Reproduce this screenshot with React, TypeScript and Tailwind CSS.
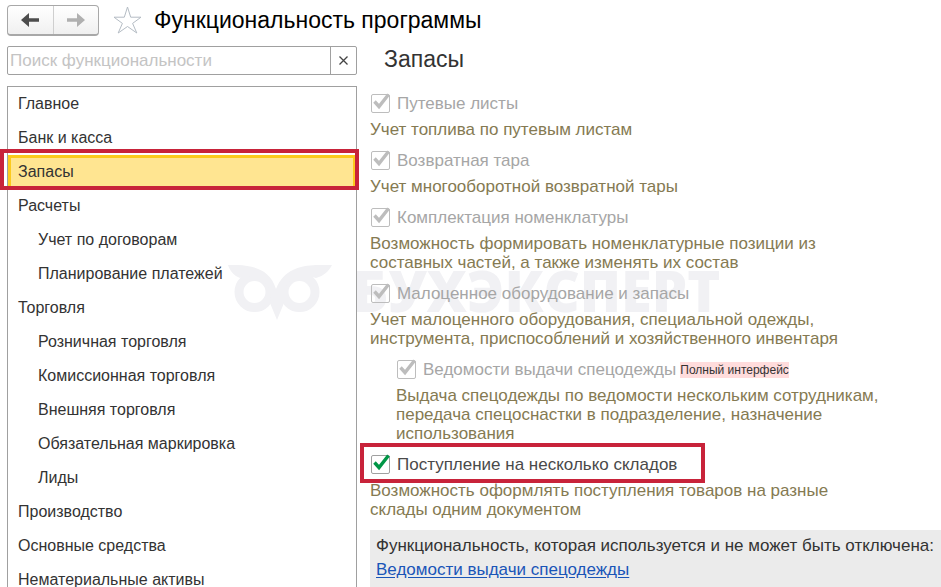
import { useState } from 'react';
import clsx from 'clsx';

type Feature = {
  id: string;
  label: string;
  description: string;
  locked?: boolean;
  nested?: boolean;
  badge?: string;
  highlighted?: boolean;
};

const sections = [
  { title: 'Главное' },
  { title: 'Банк и касса' },
  { title: 'Запасы' },
  { title: 'Расчеты' },
  { title: 'Учет по договорам', nested: true },
  { title: 'Планирование платежей', nested: true },
  { title: 'Торговля' },
  { title: 'Розничная торговля', nested: true },
  { title: 'Комиссионная торговля', nested: true },
  { title: 'Внешняя торговля', nested: true },
  { title: 'Обязательная маркировка', nested: true },
  { title: 'Лиды', nested: true },
  { title: 'Производство' },
  { title: 'Основные средства' },
  { title: 'Нематериальные активы' },
];

const features: Feature[] = [
  { id: 'waybills', label: 'Путевые листы', description: 'Учет топлива по путевым листам', locked: true },
  { id: 'tare', label: 'Возвратная тара', description: 'Учет многооборотной возвратной тары', locked: true },
  {
    id: 'kits',
    label: 'Комплектация номенклатуры',
    description: 'Возможность формировать номенклатурные позиции из составных частей, а также изменять их состав',
    locked: true,
  },
  {
    id: 'low-value',
    label: 'Малоценное оборудование и запасы',
    description:
      'Учет малоценного оборудования, специальной одежды, инструмента, приспособлений и хозяйственного инвентаря',
    locked: true,
  },
  {
    id: 'workwear',
    label: 'Ведомости выдачи спецодежды',
    description:
      'Выдача спецодежды по ведомости нескольким сотрудникам, передача спецоснастки в подразделение, назначение использования',
    locked: true,
    nested: true,
    badge: 'Полный интерфейс',
  },
  {
    id: 'warehouses',
    label: 'Поступление на несколько складов',
    description: 'Возможность оформлять поступления товаров на разные склады одним документом',
    highlighted: true,
  },
];

function Watermark() {
  return (
    <div aria-hidden="true" className="pointer-events-none absolute left-[228px] top-[264px] -z-10 flex items-start text-[#f1f1f4]">
      <svg width="104" height="57" viewBox="0 0 104 57" fill="none" stroke="currentColor">
        <circle cx="26.500" cy="28" r="15.500" strokeWidth="9" />
        <circle cx="71.500" cy="28" r="15.500" strokeWidth="9" />
        <path
          fill="currentColor"
          stroke="none"
          d="M0 1h10c15 1 32 4 38 24 8-20 24-23 40-24h16c-3 6-8 11-16 13-6-2-12-2-19-1-9 3-15 13-13 26l-7 17-7-17c2-13-4-23-13-26-6-2-12-1-17 1C6 12 2 7 0 1Z"
        />
      </svg>
      <span className="ml-5 font-['Open_Sans',sans-serif] text-[56px] leading-[52px] font-extrabold">БУХЭКСПЕРТ</span>
    </div>
  );
}

function FeatureRow({ feature }: { feature: Feature }) {
  const [checked, setChecked] = useState(true);

  return (
    <div className={clsx(feature.nested && 'pl-[26px]')}>
      <div className="relative flex items-center pt-3 pb-[7px] pl-px leading-[19px]">
        {feature.highlighted && (
          <span className="pointer-events-none absolute top-0 -left-2.5 h-10 w-[345px] border-4 border-[#c8233a]" />
        )}
        <span className="grid size-[19px] shrink-0">
          <input
            id={feature.id}
            type="checkbox"
            checked={checked}
            disabled={feature.locked}
            onChange={(e) => setChecked(e.target.checked)}
            className={clsx(
              'col-start-1 row-start-1 size-[19px] appearance-none rounded-xs border',
              feature.locked ? 'border-[#bdbdbd]' : 'border-[#a0a0a0]',
            )}
          />
          {checked && (
            <svg
              viewBox="0 0 19 19"
              fill="none"
              stroke="currentColor"
              className={clsx(
                'pointer-events-none col-start-1 row-start-1 size-[19px] overflow-visible',
                feature.locked ? 'text-[#bdbdbd]' : 'text-[#009646]',
              )}
            >
              <path d="M3.500 7.500 8 12.500 17.500.5" strokeWidth="3.400" />
            </svg>
          )}
        </span>
        <label htmlFor={feature.id} className={clsx('ml-[7px]', feature.locked ? 'text-[#a6a6a6]' : 'text-[#4a4a4a]')}>
          {feature.label}
        </label>
        {feature.badge && (
          <span className="ml-1 bg-[#ffdcdc] text-xs leading-4 text-[#333]">{feature.badge}</span>
        )}
      </div>
      <p className="max-w-[500px] text-[#857a52]">{feature.description}</p>
    </div>
  );
}

export default function App() {
  const [query, setQuery] = useState('');
  const [active, setActive] = useState('Запасы');

  return (
    <div className="relative isolate flex h-screen flex-col overflow-hidden bg-white font-['Liberation_Sans',Arial,sans-serif] text-[17px] leading-[19px] text-[#333]">
      <Watermark />
      <header className="flex h-[46px] shrink-0 items-start pt-[5px] pl-[7px]">
        <div className="flex h-[31px] w-[92px] rounded-sm border border-b-2 border-[#a8a8a8] bg-linear-to-b from-white to-[#f0f0f0]">
          <button type="button" aria-label="Назад" className="flex flex-1 items-center justify-center border-r border-[#cfcfcf] text-[#4d4d4d]">
            <svg width="18" height="14" viewBox="0 0 18 14" fill="currentColor">
              <path d="M0 7 8 0v5.300h10v3.400H8V14Z" />
            </svg>
          </button>
          <button type="button" aria-label="Вперед" className="flex flex-1 items-center justify-center text-[#b0b0b0]">
            <svg width="18" height="14" viewBox="0 0 18 14" fill="currentColor">
              <path d="M18 7 10 0v5.300H0v3.400h10V14Z" />
            </svg>
          </button>
        </div>
        <button type="button" aria-label="В избранное" className="ml-3.5 text-[#b4bcc4]">
          <svg width="29" height="30" viewBox="0 0 29 30" fill="none" stroke="currentColor">
            <path d="m14.500 2 3.200 10.200H28l-8.400 6.200L23.800 28l-9.300-6.500L5.200 28l4.200-9.600L1 12.200h10.300Z" />
          </svg>
        </button>
        <h1 className="ml-3 text-[23px] leading-[30px] text-black">Функциональность программы</h1>
      </header>

      <div className="flex min-h-0 flex-1">
        <aside className="ml-[7px] flex w-[350px] shrink-0 flex-col">
          <div className="flex h-[29px] shrink-0 rounded-xs border border-[#a0a0a0] bg-white">
            <input
              type="text"
              aria-label="Поиск функциональности"
              placeholder="Поиск функциональности"
              value={query}
              onChange={(e) => setQuery(e.target.value)}
              className="min-w-0 flex-1 px-0.5 outline-none placeholder:text-[#c4c4c4]"
            />
            <button
              type="button"
              aria-label="Очистить"
              onClick={() => setQuery('')}
              className="flex w-[26px] items-center justify-center border-l border-[#a0a0a0] text-[#444]"
            >
              <svg width="9" height="9" viewBox="0 0 9 9" stroke="currentColor" strokeWidth="1.300">
                <path d="m.5.5 8 8M8.500.5l-8 8" />
              </svg>
            </button>
          </div>
          <nav className="mt-[11px] min-h-0 flex-1 border border-b-0 border-[#a0a0a0] text-base">
            <ul>
              {sections.map(({ title, nested }) => (
                <li key={title} className="relative">
                  <button
                    type="button"
                    onClick={() => setActive(title)}
                    className={clsx(
                      'flex h-[34px] w-full items-center border-3 pb-0.5 text-left leading-[19px]',
                      nested ? 'pl-[27px]' : 'pl-[7px]',
                      title === active ? 'border-[#fcca1d] bg-[#ffe591]' : 'border-transparent',
                    )}
                  >
                    {title}
                  </button>
                  {title === active && (
                    <span className="pointer-events-none absolute -top-1.5 -right-[3px] -left-2 h-[41px] border-4 border-[#c8233a]" />
                  )}
                </li>
              ))}
            </ul>
          </nav>
        </aside>

        <main className="ml-[13px] min-w-0 flex-1">
          <h2 className="h-9 pl-3.5 text-[23px] leading-[27px]">Запасы</h2>
          {features.map((feature) => (
            <FeatureRow key={feature.id} feature={feature} />
          ))}
          <section className="mt-[11px] bg-[#ebebeb] pt-1.5 pb-4 pl-1.5">
            <p>Функциональность, которая используется и не может быть отключена:</p>
            <a href="#workwear" className="mt-[5px] inline-block text-[#1a55b8] underline underline-offset-2">
              Ведомости выдачи спецодежды
            </a>
          </section>
        </main>
      </div>
    </div>
  );
}
